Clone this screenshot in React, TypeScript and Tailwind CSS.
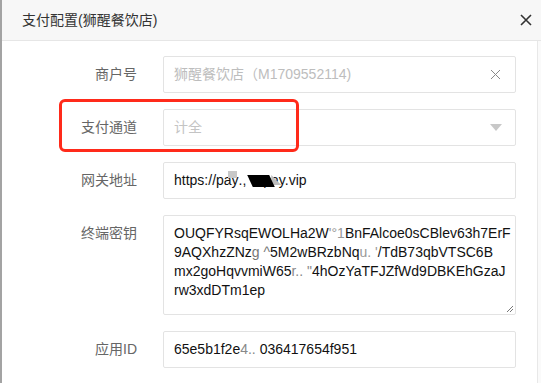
import React from 'react';

const font = { fontFamily: '"Liberation Sans", "Noto Sans CJK SC", sans-serif' };

const Label: React.FC<{ children: React.ReactNode }> = ({ children }) => (
  <div className="w-[135px] shrink-0 text-right text-[14px] leading-[37px] text-[#666]">
    {children}
  </div>
);

const Field: React.FC<{ children: React.ReactNode; className?: string }> = ({
  children,
  className = '',
}) => (
  <div
    className={`relative ml-[26px] flex h-[37px] w-[353px] items-center rounded-[2px] border border-[#e3e3e3] bg-white pl-[10px] pr-[10px] text-[14px] text-[#111] ${className}`}
  >
    {children}
  </div>
);

export default function App() {
  return (
    <div className="relative flex h-[383px] w-[541px] overflow-hidden bg-white" style={font}>
      <div className="w-[2px] shrink-0 bg-[#a3a3a3]" />
      <div className="flex flex-1 flex-col">
        <header className="flex h-[41px] shrink-0 items-center justify-between border-b border-[#e6e6e6] bg-[#f7f7f7] pl-[20px] pr-[8px]">
          <span className="text-[14px] text-[#333]">支付配置(狮醒餐饮店)</span>
          <svg width="12" height="12" viewBox="0 0 12 12" className="mr-[1px]">
            <path d="M1 1L11 11M11 1L1 11" stroke="#333" strokeWidth="1.6" />
          </svg>
        </header>
        <div className="flex flex-1">
          <div className="flex flex-1 flex-col gap-4 pt-[15px]">
            <div className="flex">
              <Label>商户号</Label>
              <Field className="justify-between">
                <span className="text-[#bdbdbd]">狮醒餐饮店（M1709552114)</span>
                <svg width="11" height="11" viewBox="0 0 11 11" className="mr-[4px]">
                  <path d="M1 1L10 10M10 1L1 10" stroke="#8a8a8a" strokeWidth="1" />
                </svg>
              </Field>
            </div>
            <div className="flex">
              <Label>支付通道</Label>
              <Field className="justify-between">
                <span className="text-[#c4c4c4]">计全</span>
                <svg width="12" height="7" viewBox="0 0 12 7" className="mr-[3px]">
                  <path d="M0 0H12L6 7Z" fill="#c8c8c8" />
                </svg>
              </Field>
            </div>
            <div className="flex">
              <Label>网关地址</Label>
              <Field>
                <span>https://pa</span>
                <span className="relative">
                  y
                  <span className="absolute left-[-4px] top-[1px] h-[7px] w-[9px] bg-[#c8c8c8]" />
                </span>
                <span className="whitespace-pre">., </span>
                <span className="relative z-10 -mr-[9px] inline-block h-[12px] w-[22px] skew-x-[25deg] bg-black" />
                <span className="relative">
                  pay.vip
                  <span className="absolute left-[8px] top-[5px] h-[10px] w-[10px] bg-[#bdbdbd] [clip-path:polygon(0_0,100%_100%,0_100%)]" />
                </span>
              </Field>
            </div>
            <div className="flex">
              <Label>终端密钥</Label>
              <div className="relative ml-[26px] h-[100px] w-[353px] rounded-[2px] border border-[#e3e3e3] bg-white pl-[10px] pt-[8px] text-[14px] leading-[19px] text-[#111]">
                <div>
                  OUQFYRsqEWOLHa2W<span className="text-[#999]">'°1</span>BnFAlcoe0sCBlev63h7ErF
                </div>
                <div>
                  9AQXhzZNz<span className="text-[#777]">g ^</span>5M2wBRzbNq<span className="text-[#999]">u. '</span>/TdB73qbVTSC6B
                </div>
                <div>
                  mx2goHqvvmiW65<span className="text-[#888]">r.. "</span>4hOzYaTFJZfWd9DBKEhGzaJ
                </div>
                <div>rw3xdDTm1ep</div>
                <svg width="7" height="7" viewBox="0 0 7 7" className="absolute bottom-[2px] right-[2px]">
                  <path d="M1 7L7 1M4 7L7 4" stroke="#777" strokeWidth="1" />
                </svg>
              </div>
            </div>
            <div className="flex">
              <Label>应用ID</Label>
              <Field>
                <span>
                  65e5b1f2e<span className="text-[#888]">4.. </span>036417654f951
                </span>
              </Field>
            </div>
          </div>
          <div className="w-[4px] shrink-0 border-l border-[#e8e8e8] bg-[#fafafa]" />
        </div>
      </div>
      <div className="absolute left-[59px] top-[99px] h-[53px] w-[240px] rounded-[6px] border-[3px] border-[#ff2a1a]" />
    </div>
  );
}
